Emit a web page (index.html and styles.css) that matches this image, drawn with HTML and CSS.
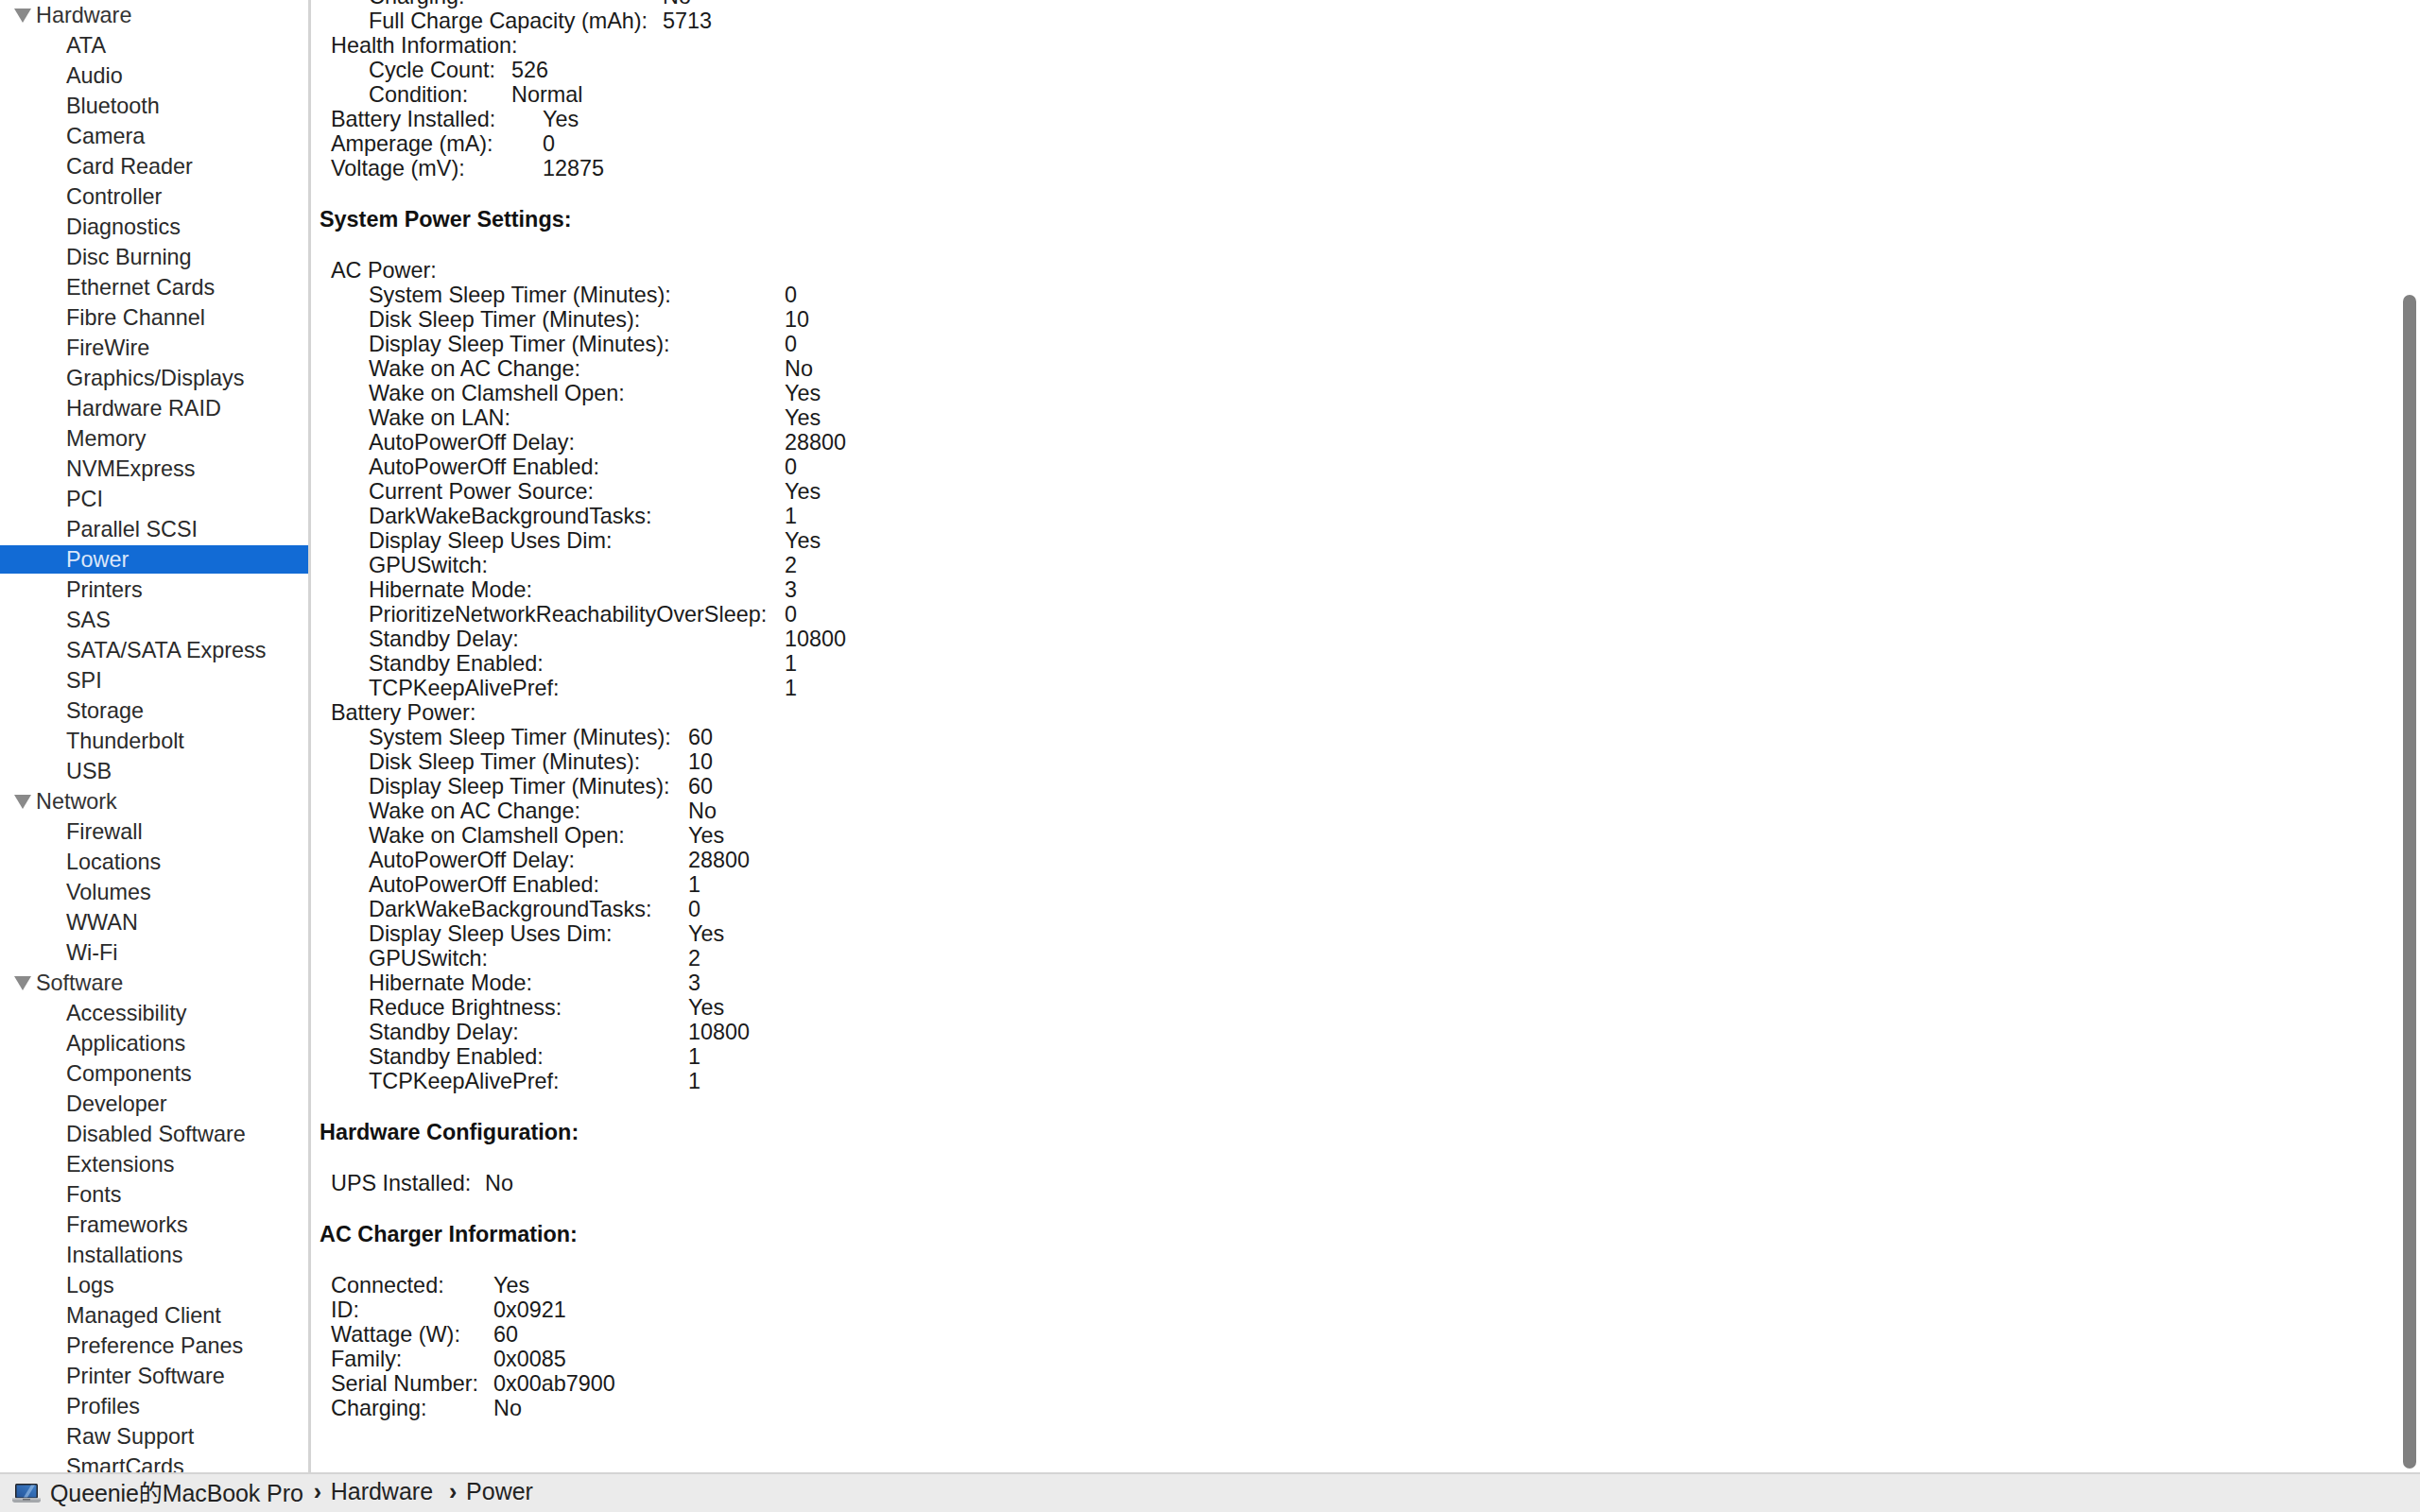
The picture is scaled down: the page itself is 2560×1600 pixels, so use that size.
FILE: index.html
```html
<!DOCTYPE html>
<html lang="en">
<head>
<meta charset="utf-8">
<title>System Information</title>
<link rel="stylesheet" href="styles.css">
</head>
<body>
<div class="app">
  <div class="main">
    <nav class="sidebar">
      <div class="group"><svg class="tri" viewBox="0 0 18 15"><path d="M0 0H18L9 15Z"/></svg>Hardware</div>
      <div class="item">ATA</div><div class="item">Audio</div><div class="item">Bluetooth</div><div class="item">Camera</div><div class="item">Card Reader</div><div class="item">Controller</div><div class="item">Diagnostics</div><div class="item">Disc Burning</div><div class="item">Ethernet Cards</div><div class="item">Fibre Channel</div><div class="item">FireWire</div><div class="item">Graphics/Displays</div><div class="item">Hardware RAID</div><div class="item">Memory</div><div class="item">NVMExpress</div><div class="item">PCI</div><div class="item">Parallel SCSI</div>
      <div class="item selected">Power</div>
      <div class="item">Printers</div><div class="item">SAS</div><div class="item">SATA/SATA Express</div><div class="item">SPI</div><div class="item">Storage</div><div class="item">Thunderbolt</div><div class="item">USB</div>
      <div class="group"><svg class="tri" viewBox="0 0 18 15"><path d="M0 0H18L9 15Z"/></svg>Network</div>
      <div class="item">Firewall</div><div class="item">Locations</div><div class="item">Volumes</div><div class="item">WWAN</div><div class="item">Wi-Fi</div>
      <div class="group"><svg class="tri" viewBox="0 0 18 15"><path d="M0 0H18L9 15Z"/></svg>Software</div>
      <div class="item">Accessibility</div><div class="item">Applications</div><div class="item">Components</div><div class="item">Developer</div><div class="item">Disabled Software</div><div class="item">Extensions</div><div class="item">Fonts</div><div class="item">Frameworks</div><div class="item">Installations</div><div class="item">Logs</div><div class="item">Managed Client</div><div class="item">Preference Panes</div><div class="item">Printer Software</div><div class="item">Profiles</div><div class="item">Raw Support</div><div class="item">SmartCards</div>
    </nav>
    <main class="content">
      <div class="scroller">
        <div class="kv sub col-battery-a"><span>Charging:</span><span>No</span><span>Full Charge Capacity (mAh):</span><span>5713</span></div>
        <div class="l1">Health Information:</div>
        <div class="kv sub col-health"><span>Cycle Count:</span><span>526</span><span>Condition:</span><span>Normal</span></div>
        <div class="kv top col-battery-b"><span>Battery Installed:</span><span>Yes</span><span>Amperage (mA):</span><span>0</span><span>Voltage (mV):</span><span>12875</span></div>

        <h2>System Power Settings:</h2>
        <div class="l1">AC Power:</div>
        <div class="kv sub col-ac">
          <span>System Sleep Timer (Minutes):</span><span>0</span>
          <span>Disk Sleep Timer (Minutes):</span><span>10</span>
          <span>Display Sleep Timer (Minutes):</span><span>0</span>
          <span>Wake on AC Change:</span><span>No</span>
          <span>Wake on Clamshell Open:</span><span>Yes</span>
          <span>Wake on LAN:</span><span>Yes</span>
          <span>AutoPowerOff Delay:</span><span>28800</span>
          <span>AutoPowerOff Enabled:</span><span>0</span>
          <span>Current Power Source:</span><span>Yes</span>
          <span>DarkWakeBackgroundTasks:</span><span>1</span>
          <span>Display Sleep Uses Dim:</span><span>Yes</span>
          <span>GPUSwitch:</span><span>2</span>
          <span>Hibernate Mode:</span><span>3</span>
          <span>PrioritizeNetworkReachabilityOverSleep:</span><span>0</span>
          <span>Standby Delay:</span><span>10800</span>
          <span>Standby Enabled:</span><span>1</span>
          <span>TCPKeepAlivePref:</span><span>1</span>
        </div>
        <div class="l1">Battery Power:</div>
        <div class="kv sub col-bat">
          <span>System Sleep Timer (Minutes):</span><span>60</span>
          <span>Disk Sleep Timer (Minutes):</span><span>10</span>
          <span>Display Sleep Timer (Minutes):</span><span>60</span>
          <span>Wake on AC Change:</span><span>No</span>
          <span>Wake on Clamshell Open:</span><span>Yes</span>
          <span>AutoPowerOff Delay:</span><span>28800</span>
          <span>AutoPowerOff Enabled:</span><span>1</span>
          <span>DarkWakeBackgroundTasks:</span><span>0</span>
          <span>Display Sleep Uses Dim:</span><span>Yes</span>
          <span>GPUSwitch:</span><span>2</span>
          <span>Hibernate Mode:</span><span>3</span>
          <span>Reduce Brightness:</span><span>Yes</span>
          <span>Standby Delay:</span><span>10800</span>
          <span>Standby Enabled:</span><span>1</span>
          <span>TCPKeepAlivePref:</span><span>1</span>
        </div>

        <h2>Hardware Configuration:</h2>
        <div class="kv top col-ups"><span>UPS Installed:</span><span>No</span></div>

        <h2>AC Charger Information:</h2>
        <div class="kv top col-charger">
          <span>Connected:</span><span>Yes</span>
          <span>ID:</span><span>0x0921</span>
          <span>Wattage (W):</span><span>60</span>
          <span>Family:</span><span>0x0085</span>
          <span>Serial Number:</span><span>0x00ab7900</span>
          <span>Charging:</span><span>No</span>
        </div>
      </div>
      <div class="thumb"></div>
    </main>
  </div>
  <footer class="status">
    <svg class="laptop" viewBox="0 0 30 20">
      <defs><linearGradient id="scr" x1="0" y1="1" x2="1" y2="0"><stop offset="0" stop-color="#23549a"/><stop offset="1" stop-color="#3f7fc8"/></linearGradient></defs>
      <rect x="3" y="0" width="24" height="15.500" rx="1.500" fill="#23252a"/>
      <rect x="4.500" y="1.500" width="21" height="13" fill="url(#scr)"/>
      <path d="M12 14.500L20 1.500H24L16 14.500Z" fill="#8fb6e2" opacity=".7"/>
      <path d="M0 15.500H30V17.500C30 19 29 20 27.500 20H2.500C1 20 0 19 0 17.500Z" fill="#a4a7ab"/>
      <rect x="0" y="15.500" width="30" height="1" fill="#d2d4d6"/>
      <rect x="11" y="16" width="8" height="1.500" fill="#6d7074"/>
    </svg>
    <span class="crumb first">Queenie的MacBook Pro</span>
    <span class="sep first-sep">›</span>
    <span class="crumb hw">Hardware</span>
    <span class="sep">›</span>
    <span class="crumb">Power</span>
  </footer>
</div>
</body>
</html>
```
FILE: styles.css
```css
* { box-sizing: border-box; }
html, body { margin: 0; height: 100%; }
body {
  font-family: "Liberation Sans", "Noto Sans CJK SC", sans-serif;
  font-size: 23.4px;
  color: #1a1a1a;
  background: #fff;
  overflow: hidden;
}
.app { display: flex; flex-direction: column; height: 1600px; }
.main { flex: 1; display: flex; min-height: 0; }

.sidebar {
  width: 329px;
  flex: none;
  border-right: 3px solid #d4d4d4;
  overflow: hidden;
}
.group, .item { height: 32px; line-height: 32px; white-space: nowrap; }
.group { display: flex; align-items: center; padding-left: 15px; color: #333; }
.tri { width: 18px; height: 15px; margin-right: 5px; fill: #8a8a8a; }
.item { padding-left: 70px; color: #2a2a2a; }
.item.selected { background: #126bd5; color: #dbe7fa; height: 30px; line-height: 30px; margin: 1px 0; }

.content { flex: 1; min-width: 0; position: relative; overflow: hidden; }
.scroller { margin-top: -17px; padding-left: 9px; }
.l1 { height: 26px; line-height: 26px; padding-left: 12px; }
h2 {
  margin: 28px 0;
  font-size: 23.4px;
  font-weight: bold;
  height: 26px;
  line-height: 26px;
  color: #111;
}
.kv { display: grid; grid-auto-rows: 26px; line-height: 26px; white-space: nowrap; justify-content: start; }
.kv.sub { padding-left: 52px; }
.kv.top { padding-left: 12px; }
.col-battery-a { grid-template-columns: 311px auto; }
.col-health { grid-template-columns: 151px auto; }
.col-battery-b { grid-template-columns: 224px auto; }
.col-ac { grid-template-columns: 440px auto; }
.col-bat { grid-template-columns: 338px auto; }
.col-ups { grid-template-columns: 163px auto; }
.col-charger { grid-template-columns: 172px auto; }

.thumb {
  position: absolute;
  right: 4px;
  top: 312px;
  bottom: 4px;
  width: 14px;
  border-radius: 7px;
  background: #808080;
}

.status {
  height: 42px;
  flex: none;
  background: #ebebeb;
  border-top: 2px solid #d4d4d4;
  display: flex;
  align-items: center;
  padding-left: 13px;
  padding-bottom: 4px;
  font-size: 25px;
  color: #222;
  white-space: nowrap;
}
.laptop { width: 30px; height: 20px; margin-right: 10px; margin-top: 4px; }
.crumb.first { letter-spacing: -0.1px; }
.sep { margin-left: 17px; width: 18px; font-weight: bold; }
.first-sep { margin-left: 11px; }
```
